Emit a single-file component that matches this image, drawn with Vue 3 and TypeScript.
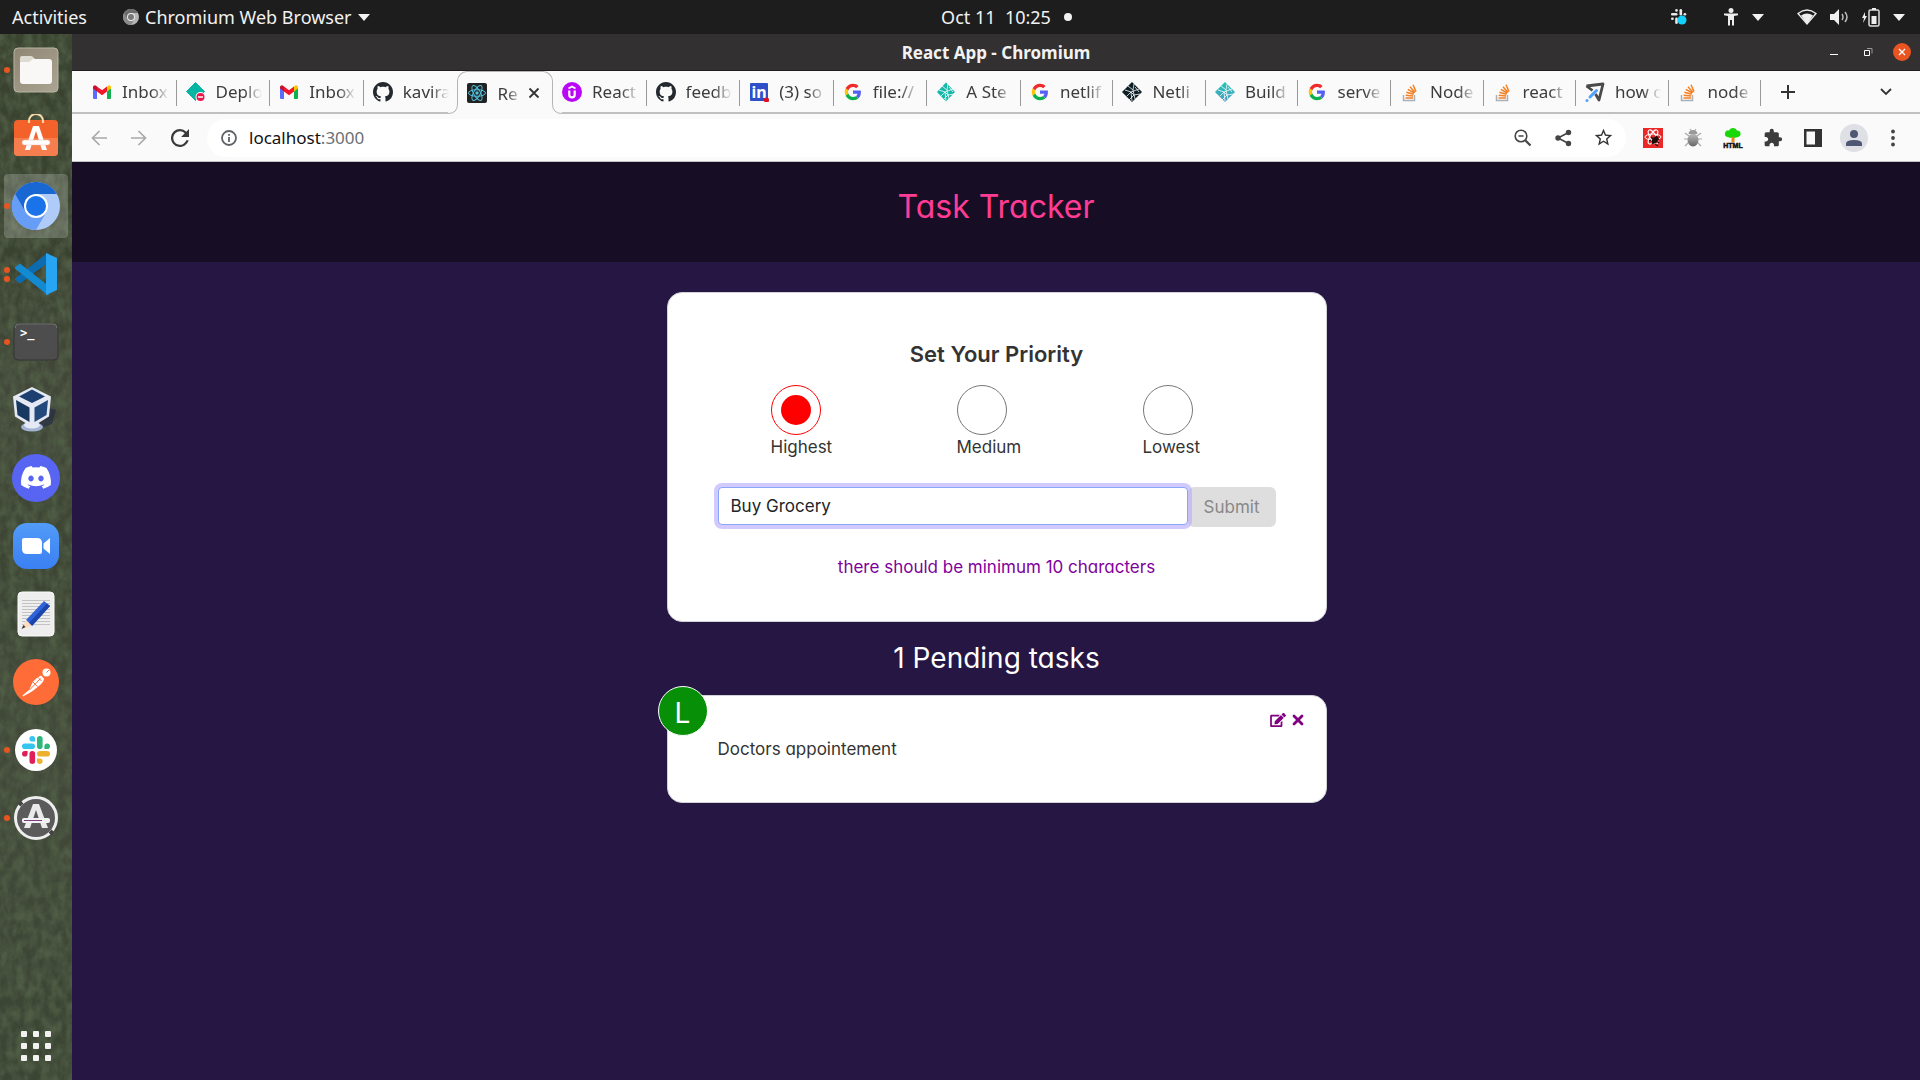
<script setup lang="ts">
import { ref } from 'vue'

interface Tab {
  icon: string
  title: string
  active?: boolean
}

interface DockApp {
  name: string
  icon: string
  windows: number
  focused?: boolean
}

interface Task {
  badge: string
  text: string
}

const tabs: Tab[] = [
  { icon: 'gmail', title: 'Inbox' },
  { icon: 'deploy', title: 'Deplo' },
  { icon: 'gmail', title: 'Inbox' },
  { icon: 'github', title: 'kavira' },
  { icon: 'react', title: 'Re', active: true },
  { icon: 'udemy', title: 'React' },
  { icon: 'github', title: 'feedb' },
  { icon: 'linkedin', title: '(3) so' },
  { icon: 'google', title: 'file://' },
  { icon: 'netlify-teal', title: 'A Ste' },
  { icon: 'google', title: 'netlif' },
  { icon: 'netlify-dark', title: 'Netli' },
  { icon: 'netlify-blue', title: 'Build' },
  { icon: 'google', title: 'serve' },
  { icon: 'stack', title: 'Node' },
  { icon: 'stack', title: 'react' },
  { icon: 'plane', title: 'how o' },
  { icon: 'stack', title: 'node' },
]

const dockApps: DockApp[] = [
  { name: 'Files', icon: 'files', windows: 1 },
  { name: 'Ubuntu Software', icon: 'software', windows: 0 },
  { name: 'Chromium', icon: 'chromium', windows: 1, focused: true },
  { name: 'Visual Studio Code', icon: 'vscode', windows: 2 },
  { name: 'Terminal', icon: 'terminal', windows: 1 },
  { name: 'VirtualBox', icon: 'vbox', windows: 0 },
  { name: 'Discord', icon: 'discord', windows: 0 },
  { name: 'Zoom', icon: 'zoom', windows: 0 },
  { name: 'Text Editor', icon: 'editor', windows: 0 },
  { name: 'Postman', icon: 'postman', windows: 0 },
  { name: 'Slack', icon: 'slack', windows: 1 },
  { name: 'Software Updater', icon: 'updater', windows: 1 },
]

const priorities = ['Highest', 'Medium', 'Lowest']
const priority = ref('Highest')
const draft = ref('Buy Grocery')
const tasks: Task[] = [{ badge: 'L', text: 'Doctors appointement' }]
</script>

<template>
  <svg class="sprite" aria-hidden="true">
    <defs>
      <linearGradient id="g-files" x1="0" y1="0" x2="1" y2="1"><stop offset="0" stop-color="#8f8672" /><stop offset="1" stop-color="#aaa492" /></linearGradient>
      <linearGradient id="g-zoom" x1="0" y1="0" x2="0" y2="1"><stop offset="0" stop-color="#529bf8" /><stop offset="1" stop-color="#3a80f3" /></linearGradient>
      <linearGradient id="g-net" x1="0" y1="0" x2="0" y2="1"><stop offset="0" stop-color="#20c6b7" /><stop offset="1" stop-color="#4d9abf" /></linearGradient>
      <linearGradient id="g-bug" x1="0" y1="0" x2="0" y2="1"><stop offset="0" stop-color="#bbb" /><stop offset="1" stop-color="#666" /></linearGradient>

      <symbol id="gmail" viewBox="0 0 20 20">
        <path d="M1 5v11a1 1 0 0 0 1 1h3V8z" fill="#5b6cff" /><path d="M19 5v11a1 1 0 0 1-1 1h-3V8z" fill="#10b050" />
        <path d="M15 4.500l1-.8a1.900 1.900 0 0 1 3 1.300v1.500L15 9.500z" fill="#ffc400" />
        <path d="M5 4.500l-1-.8a1.900 1.900 0 0 0-3 1.300v1.500L5 9.500z" fill="#c5102c" />
        <path d="M5 4.500v5l5 3.800 5-3.800v-5l-5 3.800z" fill="#f4152b" />
      </symbol>
      <symbol id="deploy" viewBox="0 0 20 20">
        <path d="M9.500 0.500l9 9-9 9-9-9z" fill="#05b5a3" stroke="#05b5a3" stroke-linejoin="round" />
        <circle cx="14.500" cy="15" r="5" fill="#fff" /><circle cx="14.500" cy="15" r="4" fill="#f0144d" /><path d="M12 15h5" stroke="#fff" stroke-width="1.500" />
      </symbol>
      <symbol id="github" viewBox="0 0 16 16">
        <path fill="#24292f" d="M8 0C3.580 0 0 3.580 0 8c0 3.540 2.290 6.530 5.470 7.590.4.070.55-.17.55-.38 0-.19-.01-.82-.01-1.490-2.010.37-2.530-.49-2.690-.94-.09-.23-.48-.94-.82-1.130-.28-.15-.68-.52-.01-.53.63-.01 1.080.58 1.230.82.72 1.210 1.870.87 2.330.66.07-.52.28-.87.51-1.070-1.780-.2-3.640-.89-3.640-3.950 0-.87.31-1.590.82-2.150-.08-.2-.36-1.020.08-2.120 0 0 .67-.21 2.200.82.64-.18 1.320-.27 2-.27.68 0 1.360.09 2 .27 1.530-1.040 2.200-.82 2.200-.82.44 1.100.16 1.920.08 2.120.51.56.82 1.270.82 2.150 0 3.070-1.870 3.750-3.650 3.950.29.25.54.73.54 1.480 0 1.070-.01 1.930-.01 2.200 0 .21.15.46.55.38A8.013 8.013 0 0016 8c0-4.420-3.580-8-8-8z" />
      </symbol>
      <symbol id="react" viewBox="0 0 20 20">
        <rect width="20" height="20" rx="2" fill="#222" />
        <g fill="none" stroke="#53c1de" stroke-width="1"><ellipse cx="10" cy="10" rx="8.500" ry="3.300" /><ellipse cx="10" cy="10" rx="8.500" ry="3.300" transform="rotate(60 10 10)" /><ellipse cx="10" cy="10" rx="8.500" ry="3.300" transform="rotate(120 10 10)" /></g>
        <circle cx="10" cy="10" r="1.700" fill="#53c1de" />
      </symbol>
      <symbol id="udemy" viewBox="0 0 20 20">
        <circle cx="10" cy="10" r="10" fill="#b808f5" />
        <path d="M6.500 6.500L10 4.500l3.500 2" fill="none" stroke="#fff" stroke-width="1.800" />
        <path d="M7.300 8.500v4.200a2.700 2.700 0 0 0 5.400 0V8.500" fill="none" stroke="#fff" stroke-width="2.200" />
      </symbol>
      <symbol id="linkedin" viewBox="0 0 20 20">
        <rect x="1" y="1" width="18" height="18" rx="1" fill="#2f4fc8" />
        <text x="10" y="16" text-anchor="middle" font-family="Noto Sans, sans-serif" font-weight="700" font-size="16" fill="#fff">in</text>
        <circle cx="17.500" cy="18" r="2.600" fill="#e01020" />
      </symbol>
      <symbol id="google" viewBox="-5 -5 58 58">
        <path fill="#f02b2b" d="M24 9.500c3.540 0 6.710 1.220 9.210 3.600l6.850-6.850C35.900 2.380 30.470 0 24 0 14.620 0 6.510 5.380 2.560 13.220l7.980 6.190C12.430 13.720 17.740 9.500 24 9.500z" />
        <path fill="#5560f5" d="M46.980 24.550c0-1.570-.15-3.090-.38-4.550H24v9.020h12.940c-.58 2.960-2.260 5.480-4.780 7.180l7.730 6c4.510-4.180 7.090-10.360 7.090-17.650z" />
        <path fill="#ffc20a" d="M10.530 28.590c-.48-1.450-.76-2.990-.76-4.590s.27-3.140.76-4.590l-7.980-6.190C.92 16.460 0 20.120 0 24c0 3.880.92 7.540 2.560 10.780z" />
        <path fill="#0bb04a" d="M24 48c6.480 0 11.930-2.130 15.890-5.810l-7.730-6c-2.150 1.450-4.920 2.300-8.160 2.300-6.260 0-11.570-4.220-13.470-9.910l-7.980 6.190C6.510 42.620 14.620 48 24 48z" />
      </symbol>
      <symbol id="net-lines" viewBox="0 0 20 20">
        <path d="M3 8l6 2 8-3M6 4l5 4 2 9M9 10l-4 4M11 8l1-6M12 13l6-1M9 10l1 9M9 10l3 3-5 5M13 5l4 5" fill="none" stroke="#fafafa" stroke-width=".8" />
      </symbol>
      <symbol id="netlify-teal" viewBox="0 0 20 20"><path d="M10 .5l9 9.500-9 9.500L1 10z" fill="#14b8a8" /><use href="#net-lines" /></symbol>
      <symbol id="netlify-dark" viewBox="0 0 20 20"><path d="M10 0l10 10-10 10L0 10z" fill="#0e1e25" /><use href="#net-lines" /></symbol>
      <symbol id="netlify-blue" viewBox="0 0 20 20"><path d="M10 0l10 10-10 10L0 10z" fill="url(#g-net)" /><use href="#net-lines" /></symbol>
      <symbol id="stack" viewBox="0 0 20 20">
        <path d="M3.500 13v5.500h11V13" fill="none" stroke="#a9b0b8" stroke-width="1.500" />
        <path d="M5.500 16h7.500M5.700 13.200l7.400 .8M6.400 10.300l7.200 2M7.800 7.300l6.500 3.700M10 4.800l5 5.600M13 2.800l3 6.800" stroke="#f48024" stroke-width="1.500" />
      </symbol>
      <symbol id="plane" viewBox="0 0 20 20">
        <path d="M1.500 4L18 2l-4 16-3.500-6" fill="none" stroke="#4a4a4a" stroke-width="2.800" stroke-linejoin="round" /><path d="M1.500 4l6 4.500" stroke="#4a4a4a" stroke-width="2.800" />
        <path d="M11.500 8.500L5 15" stroke="#4da3ff" stroke-width="3" stroke-linecap="round" /><circle cx="2" cy="18.500" r="1.500" fill="#4da3ff" />
      </symbol>

      <symbol id="files" viewBox="0 0 48 48">
        <rect x="2" y="2" width="44" height="44" rx="4" fill="url(#g-files)" stroke="#b9b4a6" />
        <path d="M8 12q0-2 2-2h9q1 0 2 1l3 3v6H8z" fill="#dedbd2" />
        <path d="M8 17q0-1 1-1h8l4-3h16q3 0 3 3v19q0 3-3 3H11q-3 0-3-3z" fill="#f9f8f7" />
      </symbol>
      <symbol id="software" viewBox="0 0 48 48">
        <rect x="2" y="6" width="44" height="36" rx="4" fill="#f4622c" /><path d="M2 24h44v14a4 4 0 0 1-4 4H6a4 4 0 0 1-4-4z" fill="#f67d4e" />
        <path d="M17 9V7a7 7 0 0 1 14 0v2" fill="none" stroke="#f5d9a8" stroke-width="2" />
        <path d="M21 12h6l8 24h-5l-6-19-6 19h-5z" fill="#fff" /><rect x="10" y="26" width="28" height="5" rx="2.500" fill="#fff" stroke="#e7b9a4" stroke-width=".5" />
      </symbol>
      <symbol id="chromium" viewBox="0 0 48 48">
        <circle cx="24" cy="24" r="24" fill="#afccf9" />
        <path d="M24 24L3.200 12A24 24 0 0 0 24 48l10.400-18z" fill="#669df6" />
        <path d="M24 12h20.800A24 24 0 0 0 3.200 12L13.600 30z" fill="#1967d2" />
        <circle cx="24" cy="24" r="12" fill="#fff" /><circle cx="24" cy="24" r="10" fill="#1a73e8" />
      </symbol>
      <symbol id="vscode" viewBox="0 0 48 48">
        <path d="M3 29l5 4 28-21V3z" fill="#0d6cb0" stroke="#0d6cb0" stroke-linejoin="round" />
        <path d="M3 18l5-4 28 22v9z" fill="#138bd3" stroke="#138bd3" stroke-linejoin="round" />
        <path d="M34 3l11 5v32l-11 5z" fill="#28a5f2" />
      </symbol>
      <symbol id="terminal" viewBox="0 0 48 48">
        <rect x="2" y="6" width="44" height="36" rx="4" fill="#4d4d4d" stroke="#343434" />
        <path d="M3 10q0-4 4-4h34q4 0 4 4" fill="none" stroke="#777" />
        <text x="8" y="19" font-family="DejaVu Sans Mono, monospace" font-weight="700" font-size="12" fill="#fff">&gt;_</text>
      </symbol>
      <symbol id="vbox" viewBox="0 0 48 48">
        <path d="M30 20l14 4-4 14-16 6z" fill="#1c2547" opacity=".55" />
        <ellipse cx="20" cy="41" rx="11" ry="4.500" fill="#a4b4d3" /><ellipse cx="20" cy="39" rx="8" ry="3.500" fill="#e5eaf5" />
        <path d="M20 1l19 9.500-2 20L20 41 3 30.500l-2-20z" fill="#e4e9f3" />
        <path d="M20 3.500l13 7-13 6.500-13-6.500z" fill="#1d3f70" /><path d="M4 14l13.500 7.500V36L5.500 29z" fill="#173861" /><path d="M36 14l-13.500 7.500V36l12-7z" fill="#234a7b" />
      </symbol>
      <symbol id="discord" viewBox="0 0 48 48">
        <circle cx="24" cy="24" r="24" fill="#5865f2" />
        <path transform="translate(9 12) scale(.236)" fill="#fff" d="M107.700,8.070A105.150,105.150,0,0,0,81.470,0a72.060,72.060,0,0,0-3.360,6.830A97.680,97.680,0,0,0,49,6.830,72.370,72.370,0,0,0,45.640,0,105.890,105.890,0,0,0,19.390,8.090C2.790,32.650-1.710,56.600.54,80.210h0A105.730,105.730,0,0,0,32.710,96.360,77.700,77.700,0,0,0,39.600,85.250a68.420,68.420,0,0,1-10.850-5.180c.91-.66,1.800-1.340,2.660-2a75.570,75.570,0,0,0,64.320,0c.87.71,1.760,1.390,2.660,2a68.680,68.680,0,0,1-10.870,5.190,77,77,0,0,0,6.890,11.100A105.250,105.250,0,0,0,126.600,80.220h0C129.240,52.840,122.090,29.110,107.700,8.070ZM42.450,65.690C36.180,65.690,31,60,31,53s5-12.740,11.430-12.740S54,46,53.890,53,48.840,65.690,42.450,65.690Zm42.240,0C78.410,65.690,73.250,60,73.250,53s5-12.740,11.440-12.740S96.230,46,96.120,53,91.080,65.690,84.690,65.690Z" />
      </symbol>
      <symbol id="zoom" viewBox="0 0 48 48">
        <rect x="1" y="1" width="46" height="46" rx="14" fill="url(#g-zoom)" />
        <path d="M10 18q0-2 2-2h13q5 0 5 5v9q0 2-2 2H15q-5 0-5-5z" fill="#fff" /><path d="M31.500 21.500l6.500-5.500v16l-6.500-5.500z" fill="#fff" />
      </symbol>
      <symbol id="editor" viewBox="0 0 48 48">
        <rect x="6" y="2" width="36" height="44" rx="4" fill="#eeeeee" stroke="#fafafa" />
        <path d="M10 10.500h28M10 13.500h28M10 16.500h28M10 19.500h28M10 22.500h28M10 25.500h28M10 28.500h28M10 31.500h28M10 34.500h28" stroke="#c3c3c3" />
        <path d="M32 11l6 5-18 20-6-6z" fill="#2f63d9" /><path d="M35 13.500L17 33l3 3 18-20z" fill="#1b45ab" /><path d="M14 30l6 6-10 3z" fill="#fbdcc0" /><path d="M11.500 35l2 2-4 2z" fill="#333" />
      </symbol>
      <symbol id="postman" viewBox="0 0 48 48">
        <circle cx="24" cy="24" r="23" fill="#ff6c37" />
        <circle cx="34.500" cy="14.500" r="4" fill="#fff" /><path d="M34.500 14.500l2.500-2.500" stroke="#ff6c37" />
        <path d="M29 17.500l3 3c0 3-3 6-7 9l-5 4-9 5-.5-1 6.500-5.500 2-4c1-4 5-8 10-10.500z" fill="#fff" />
        <path d="M28.500 20.500L17.500 32M21 24l4.500 4.500M26 19.500l3.500 3.500" stroke="#ff6c37" stroke-width="1" />
      </symbol>
      <symbol id="slack-mark" viewBox="0 0 28 28">
        <g fill="#36c5f0"><rect y="7.500" width="13" height="5.600" rx="2.800" /><path d="M13 5.600h-2.800A2.800 2.800 0 1 1 13 2.800z" /></g>
        <g fill="#2eb67d"><rect x="15" width="5.600" height="13" rx="2.800" /><path d="M22.400 13v-2.800a2.800 2.800 0 1 1 2.800 2.800z" /></g>
        <g fill="#ecb22e"><rect x="15" y="15" width="13" height="5.600" rx="2.800" /><path d="M15 22.400h2.800A2.800 2.800 0 1 1 15 25.200z" /></g>
        <g fill="#e01e5a"><rect x="7.500" y="15" width="5.600" height="13" rx="2.800" /><path d="M5.600 15v2.800A2.800 2.800 0 1 1 2.800 15z" /></g>
      </symbol>
      <symbol id="slack" viewBox="0 0 48 48"><circle cx="24" cy="24" r="21" fill="#fff" /><use href="#slack-mark" x="10" y="10" width="28" height="28" /></symbol>
      <symbol id="updater" viewBox="0 0 48 48">
        <circle cx="24" cy="24" r="20.500" fill="#5b5b5b" stroke="#eee" stroke-width="3" /><path d="M7 11l3-3M38 40l3-3" stroke="#444" stroke-width="4" />
        <path d="M21 10h6l9 24h-6l-6-18-6 18h-6z" fill="#eaeaea" /><rect x="10" y="24" width="28" height="5" rx="2" fill="#f2f2f2" /><path d="M12 26.500h18" stroke="#7d3a80" stroke-width="1" />
      </symbol>
    </defs>
  </svg>

  <div class="desktop">
    <header class="topbar">
      <div class="topbar-left">
        <button class="plain">Activities</button>
        <button class="plain app-menu">
          <svg width="16" height="16" viewBox="0 0 48 48"><circle cx="24" cy="24" r="24" fill="#b5b5b5" /><path d="M24 24L3.200 12A24 24 0 0 0 24 48l10.400-18z" fill="#8a8a8a" /><path d="M24 12h20.800A24 24 0 0 0 3.200 12L13.600 30z" fill="#6c6c6c" /><circle cx="24" cy="24" r="12" fill="#eee" /><circle cx="24" cy="24" r="9" fill="#777" /></svg>
          <span>Chromium Web Browser</span>
          <i class="caret"></i>
        </button>
      </div>
      <div class="clock"><span>Oct 11&nbsp; 10:25</span><i class="dot"></i></div>
      <div class="tray">
        <svg class="tray-slack" width="16" height="16" viewBox="0 0 16 16"><g fill="#e8e8e8"><rect y="4" width="6.500" height="2.600" rx="1.300" /><rect x="4.200" y="0" width="2.600" height="2.800" rx="1.300" /><rect x="8.500" y="0" width="2.600" height="6.500" rx="1.300" /><rect x="12.500" y="4" width="2.800" height="2.600" rx="1.300" /><rect x="0" y="8.500" width="2.800" height="2.600" rx="1.300" /><rect x="4.200" y="8.500" width="2.600" height="6.500" rx="1.300" /></g><circle cx="11" cy="11" r="4.500" fill="#12d0fa" /></svg>
        <svg class="tray-person" width="16" height="18" viewBox="0 0 16 18"><circle cx="8" cy="2.500" r="2.500" fill="#eee" /><path d="M1 5.500h14v1.800l-4 .7v9.500H9V12H7v5.500H5V8l-4-.7z" fill="#eee" /></svg>
        <i class="caret"></i>
        <svg class="tray-wifi" width="20" height="16" viewBox="0 0 20 16"><path d="M1 4.500Q10-2.500 19 4.500L10 15z" fill="none" stroke="#eee" stroke-width="1.300" /><path d="M4 6.500q6-4 12 0L10 15z" fill="#eee" /></svg>
        <svg class="tray-sound" width="20" height="18" viewBox="0 0 20 18"><path d="M1 6h4l5-5v16l-5-5H1z" fill="#eee" /><path d="M13 6q2 3 0 6M16 4q4 5 0 10" fill="none" stroke="#bbb" stroke-width="1.500" /></svg>
        <svg class="tray-battery" width="20" height="20" viewBox="0 0 20 20"><path d="M4 5L1 11h2l-1 5 4-7H4z" fill="#eee" /><rect x="8" y="3" width="10" height="16" rx="1.500" fill="none" stroke="#ddd" stroke-width="1.500" /><path d="M11 1h4v2h-4zM10.500 9h5v8h-5z" fill="#eee" /></svg>
        <i class="caret"></i>
      </div>
    </header>

    <div class="workspace">
      <nav class="dock" aria-label="Dock">
        <svg class="grass" aria-hidden="true">
          <filter id="grass" x="0" y="0" width="100%" height="100%"><feTurbulence type="fractalNoise" baseFrequency=".12 .08" numOctaves="3" seed="4" /><feColorMatrix values="0 0 0 0 .08  0 0 0 0 .11  0 0 0 0 .06  2 0 0 0 -.6" /></filter>
          <rect width="100%" height="100%" filter="url(#grass)" />
        </svg>
        <button v-for="app in dockApps" :key="app.name" class="dock-app" :class="{ focused: app.focused }" :aria-label="app.name">
          <span class="pips"><i v-for="n in app.windows" :key="n"></i></span>
          <svg width="48" height="48"><use :href="'#' + app.icon" /></svg>
        </button>
        <button class="show-apps" aria-label="Show applications"><i v-for="n in 9" :key="n"></i></button>
      </nav>

      <div class="window">
        <div class="titlebar">
          <span class="window-title">React App - Chromium</span>
          <div class="window-buttons">
            <button class="plain" aria-label="Minimize"><svg width="18" height="18"><path d="M5 11.500h8" stroke="#fff" /></svg></button>
            <button class="plain" aria-label="Restore"><svg width="18" height="18"><path d="M5.500 7.500h5v5h-5z" fill="none" stroke="#fff" /><path d="M8 5.500h5v5" fill="none" stroke="#999" /></svg></button>
            <button class="plain" aria-label="Close"><svg width="18" height="18"><circle cx="9" cy="9" r="9" fill="#e95420" /><path d="M6 6l6 6M12 6l-6 6" stroke="#fff" stroke-width="1.300" /></svg></button>
          </div>
        </div>

        <div class="tabstrip">
          <div class="tabs">
            <div v-for="(tab, i) in tabs" :key="i" class="tab" :class="{ active: tab.active, before: tabs[i + 1]?.active }">
              <svg v-if="tab.active" class="flare flare-left" width="10" height="10"><rect width="10" height="10" fill="#fafafa" /><path d="M0 9.500Q9.500 9.500 9.500 0" fill="none" stroke="#b4b4b4" /></svg>
              <svg class="favicon" width="20" height="20"><use :href="'#' + tab.icon" /></svg>
              <span class="tab-title">{{ tab.title }}</span>
              <button v-if="tab.active" class="plain tab-close" aria-label="Close tab"><svg width="12" height="12"><path d="M1.500 1.500l9 9M10.500 1.500l-9 9" stroke="#333" stroke-width="1.800" /></svg></button>
              <svg v-if="tab.active" class="flare flare-right" width="10" height="10"><rect width="10" height="10" fill="#fafafa" /><path d="M10 9.500Q.5 9.500 .5 0" fill="none" stroke="#b4b4b4" /></svg>
            </div>
          </div>
          <div class="tab-actions">
            <button class="plain" aria-label="New tab"><svg width="16" height="16"><path d="M8 1v14M1 8h14" stroke="#333" stroke-width="2" /></svg></button>
            <button class="plain" aria-label="Search tabs"><svg width="12" height="8"><path d="M1 1l5 5 5-5" fill="none" stroke="#333" stroke-width="1.800" /></svg></button>
          </div>
        </div>

        <div class="toolbar">
          <div class="nav-buttons">
            <button class="plain" aria-label="Back"><svg width="16" height="16" viewBox="0 0 16 16"><path d="M16 8H2M8.500 1L1.500 8l7 7" fill="none" stroke="#a9a9a9" stroke-width="1.700" /></svg></button>
            <button class="plain" aria-label="Forward"><svg width="16" height="16" viewBox="0 0 16 16"><path d="M0 8h14M7.500 1l7 7-7 7" fill="none" stroke="#a9a9a9" stroke-width="1.700" /></svg></button>
            <button class="plain" aria-label="Reload"><svg width="18" height="18" viewBox="4 4 16 16"><path d="M17.650 6.350A7.958 7.958 0 0 0 12 4a8 8 0 1 0 7.730 10h-2.080A6 6 0 1 1 12 6c1.660 0 3.140.69 4.220 1.780L13 11h7V4z" fill="#3a3a3a" /></svg></button>
          </div>
          <div class="omnibox">
            <svg width="24" height="24" viewBox="0 0 24 24" class="info"><circle cx="12" cy="12" r="7" fill="none" stroke="#5f6368" stroke-width="1.800" /><path d="M12 11v5M12 8v1.800" stroke="#5f6368" stroke-width="1.800" /></svg>
            <span class="url">localhost<em>:3000</em></span>
            <div class="omni-icons">
              <button class="plain" aria-label="Zoom out"><svg width="20" height="20" viewBox="0 0 20 20"><circle cx="8" cy="8" r="5.800" fill="none" stroke="#444" stroke-width="1.600" /><path d="M12.500 12.500l5 5" stroke="#444" stroke-width="2.200" /><path d="M5.500 8h5" stroke="#444" stroke-width="1.500" /></svg></button>
              <button class="plain" aria-label="Share"><svg width="20" height="20" viewBox="0 0 20 20"><path d="M15.500 4.500L5 10l10.500 5.500" fill="none" stroke="#444" stroke-width="1.600" /><circle cx="15.500" cy="4.500" r="2.700" fill="#444" /><circle cx="5" cy="10" r="2.700" fill="#444" /><circle cx="15.500" cy="15.500" r="2.700" fill="#444" /></svg></button>
              <button class="plain" aria-label="Bookmark"><svg width="21" height="21" viewBox="0 0 24 24"><path d="M22 9.240l-7.190-.62L12 2 9.190 8.630 2 9.240l5.460 4.730L5.820 21 12 17.270 18.180 21l-1.630-7.030zM12 15.400l-3.760 2.270 1-4.280-3.320-2.880 4.380-.38L12 6.100l1.710 4.040 4.380.38-3.320 2.880 1 4.280z" fill="#333" /></svg></button>
            </div>
          </div>
          <div class="extensions">
            <button class="plain" aria-label="React Developer Tools"><svg width="20" height="20" viewBox="0 0 20 20"><rect width="20" height="20" fill="#ea2828" /><g fill="none" stroke="#fff" stroke-width="1"><ellipse cx="10" cy="9" rx="8" ry="3" /><ellipse cx="10" cy="9" rx="8" ry="3" transform="rotate(60 10 9)" /><ellipse cx="10" cy="9" rx="8" ry="3" transform="rotate(120 10 9)" /></g><ellipse cx="12" cy="12" rx="2.600" ry="4.200" transform="rotate(40 12 12)" fill="#1d0d0d" /><path d="M8 9l8 6M14 8l-5 8M10 14l6-3M12 16l3 2M8 12l-2 1" stroke="#1d0d0d" stroke-width="1.200" /></svg></button>
            <button class="plain" aria-label="Bug reporter"><svg width="20" height="20" viewBox="0 0 20 20"><path d="M2 5l4 3M18 5l-4 3M1 11h18M2 18l4-4M18 18l-4-4M7 1l2 3M13 1l-2 3" stroke="#aaa" stroke-width="1.200" fill="none" /><ellipse cx="10" cy="12" rx="5.500" ry="6.500" fill="url(#g-bug)" /><path d="M5.500 6a4.500 4 0 0 1 9 0z" fill="#999" /></svg></button>
            <button class="plain" aria-label="HTML tree"><svg class="favicon" width="20" height="20" viewBox="0 0 20 20"><path d="M8.500 8h3v6.500H13H7h1.500z" fill="#e58a18" /><path d="M10 0a4 4 0 0 1 4 2.500 3.300 3.300 0 0 1 1 6.500l-3.500 1L10 8.500 8 10 4.500 9A3.300 3.300 0 0 1 6 2.500 4 4 0 0 1 10 0z" fill="#18d80a" /><text x="10" y="19.500" text-anchor="middle" font-family="Liberation Sans, sans-serif" font-weight="700" font-size="7" fill="#111" stroke="#111" stroke-width=".5">HTML</text></svg></button>
            <button class="plain" aria-label="Extensions"><svg width="20" height="20" viewBox="0 0 24 24"><path d="M20.500 11H19V7c0-1.100-.9-2-2-2h-4V3.500a2.500 2.500 0 0 0-5 0V5H4c-1.100 0-1.990.9-1.990 2v3.800H3.500c1.490 0 2.700 1.210 2.700 2.700s-1.210 2.700-2.700 2.700H2V20c0 1.100.9 2 2 2h3.800v-1.500c0-1.490 1.210-2.700 2.700-2.700s2.700 1.210 2.700 2.700V22H17c1.100 0 2-.9 2-2v-4h1.500a2.500 2.500 0 0 0 0-5z" fill="#3c3c3c" /></svg></button>
            <button class="plain" aria-label="Side panel"><svg width="20" height="20" viewBox="0 0 20 20"><path d="M1 1h18v18H1zM3.500 3.500v13H12v-13z" fill="#333" fill-rule="evenodd" /></svg></button>
            <button class="plain avatar" aria-label="Profile"><svg width="28" height="28" viewBox="0 0 28 28"><circle cx="14" cy="14" r="14" fill="#dfe0e6" /><circle cx="14" cy="10" r="4" fill="#4f5872" /><path d="M6 22v-2.500Q6 16 14 16t8 3.500V22z" fill="#4f5872" /></svg></button>
            <button class="plain" aria-label="Menu"><svg width="20" height="20" viewBox="0 0 20 20"><g fill="#444"><circle cx="10" cy="3.500" r="1.900" /><circle cx="10" cy="10" r="1.900" /><circle cx="10" cy="16.500" r="1.900" /></g></svg></button>
          </div>
        </div>

        <div class="page">
          <header class="page-header"><h1>Task Tracker</h1></header>
          <main class="page-body">
            <form class="card form-card" @submit.prevent>
              <h2 id="priority-title">Set Your Priority</h2>
              <div class="priorities" role="radiogroup" aria-labelledby="priority-title">
                <label v-for="p in priorities" :key="p" class="priority">
                  <input v-model="priority" type="radio" name="priority" :value="p" />
                  <span>{{ p }}</span>
                </label>
              </div>
              <div class="entry">
                <input v-model="draft" type="text" class="entry-text" aria-label="Task" />
                <button class="submit" type="submit" disabled>Submit</button>
              </div>
              <p class="hint">there should be minimum 10 characters</p>
            </form>

            <h2 class="pending">{{ tasks.length }} Pending tasks</h2>

            <article v-for="task in tasks" :key="task.text" class="card task-card">
              <span class="badge">{{ task.badge }}</span>
              <div class="task-actions">
                <button class="plain" aria-label="Edit"><svg width="16" height="14" viewBox="0 0 576 512"><path fill="purple" d="M402.600 83.200l90.200 90.200c3.800 3.800 3.800 10 0 13.800L274.400 405.600l-92.800 10.300c-12.400 1.400-22.900-9.100-21.500-21.500l10.300-92.800L388.800 83.200c3.800-3.800 10-3.800 13.800 0zm162-22.900l-48.800-48.800c-15.200-15.200-39.900-15.200-55.200 0l-35.400 35.400c-3.800 3.800-3.800 10 0 13.800l90.200 90.200c3.800 3.800 10 3.800 13.800 0l35.400-35.400c15.200-15.300 15.200-40 0-55.200zM384 346.200V448H64V128h229.800c3.200 0 6.200-1.300 8.500-3.500l40-40c7.600-7.600 2.200-20.500-8.500-20.500H48C21.500 64 0 85.500 0 112v352c0 26.500 21.500 48 48 48h352c26.500 0 48-21.500 48-48V306.200c0-10.700-12.900-16-20.500-8.500l-40 40c-2.200 2.300-3.500 5.300-3.500 8.500z" /></svg></button>
                <button class="plain" aria-label="Delete"><svg width="12" height="12" viewBox="0 0 12 12"><path d="M2 2l8 8M10 2l-8 8" stroke="purple" stroke-width="2.800" stroke-linecap="round" /></svg></button>
              </div>
              <p>{{ task.text }}</p>
            </article>
          </main>
        </div>
      </div>
    </div>
  </div>
</template>

<style>
body {
  margin: 0;
  background: #261643;
}
</style>

<style scoped>
.sprite {
  position: absolute;
  width: 0;
  height: 0;
}

.desktop {
  display: flex;
  flex-direction: column;
  min-height: 100vh;
  font-family: 'Noto Sans', sans-serif;
  font-size: 18px;
  color: #f2f2f2;
}

.desktop * {
  box-sizing: border-box;
}

.plain {
  display: flex;
  align-items: center;
  justify-content: center;
  padding: 0;
  border: 0;
  background: none;
  color: inherit;
  font: inherit;
}

svg {
  display: block;
  flex: none;
}

.caret {
  border: 6px solid transparent;
  border-top: 7px solid #f2f2f2;
  border-bottom: 0;
}

.topbar {
  display: grid;
  grid-template-columns: 1fr auto 1fr;
  align-items: center;
  height: 34px;
  padding: 0 15px 0 12px;
  background: #1d1d1d;
}

.topbar-left {
  display: flex;
  gap: 36px;
}

.app-menu {
  gap: 6px;
}

.clock {
  display: flex;
  align-items: center;
  gap: 13px;
  padding-left: 96px;
}

.dot {
  width: 8px;
  height: 8px;
  border-radius: 50%;
  background: #f2f2f2;
}

.tray {
  display: flex;
  justify-content: flex-end;
  align-items: center;
  gap: 12px;
}

.tray-slack {
  margin-right: 24px;
}

.tray-person {
  margin-right: 1px;
}

.tray-wifi {
  margin-left: 21px;
}

.workspace {
  display: flex;
  flex: 1;
}

.dock {
  position: relative;
  display: flex;
  flex-direction: column;
  flex: none;
  gap: 4px;
  width: 72px;
  padding: 4px 4px 16px;
  background: linear-gradient(#39432f, #39412f 20%, #43483a 35%, #3c4533 50%, #42493a 70%, #3b4533);
}

.grass {
  position: absolute;
  inset: 0;
  width: 100%;
  height: 100%;
}

.dock-app {
  position: relative;
  display: flex;
  align-items: center;
  justify-content: center;
  height: 64px;
  padding: 0;
  border: 0;
  border-radius: 4px;
  background: none;
}

.dock-app.focused {
  background: rgba(255, 255, 255, 0.2);
}

.pips {
  position: absolute;
  left: 0;
  display: flex;
  flex-direction: column;
  gap: 3px;
}

.pips i {
  width: 6px;
  height: 6px;
  border-radius: 50%;
  background: #e95420;
}

.show-apps {
  position: relative;
  display: grid;
  grid-template-columns: repeat(3, 6px);
  gap: 6px;
  align-self: center;
  margin-top: auto;
  padding: 0 0 3px;
  border: 0;
  background: none;
}

.show-apps i {
  height: 6px;
  border-radius: 1px;
  background: #f2f2f2;
}

.window {
  display: flex;
  flex: 1;
  flex-direction: column;
  min-width: 0;
}

.titlebar {
  display: grid;
  grid-template-columns: 1fr auto 1fr;
  align-items: center;
  height: 37px;
  border-bottom: 1px solid #1f1d1e;
  background: #333031;
}

.window-title {
  grid-column: 2;
  font-size: 17px;
  font-weight: 700;
}

.window-buttons {
  display: flex;
  justify-content: flex-end;
  gap: 16px;
  padding-right: 9px;
}

.tabstrip {
  display: flex;
  height: 43px;
  padding-left: 11px;
  border-bottom: 2px solid #c0c0c0;
  background: #fafafa;
  color: #3c3c3c;
  font-size: 17px;
}

.tabs {
  display: flex;
  flex: 1;
  min-width: 0;
}

.tab {
  position: relative;
  display: flex;
  flex: 70 1 0;
  align-items: center;
  gap: 10px;
  min-width: 0;
  padding: 0 8px 0 9px;
}

.tab:nth-child(-n + 10) {
  flex-grow: 71;
}

.tab::after {
  content: '';
  position: absolute;
  top: 9px;
  right: 0;
  width: 1px;
  height: 26px;
  background: #999;
}

.tab.active::after,
.tab.before::after {
  content: none;
}

.tab.active {
  z-index: 1;
  height: 43px;
  border: 1px solid #b4b4b4;
  border-bottom: 0;
  border-radius: 10px 10px 0 0;
  background: #fafafa;
}

.flare {
  position: absolute;
  bottom: 0;
}

.flare-left {
  left: -10px;
}

.flare-right {
  right: -10px;
}

.favicon {
  overflow: visible;
}

.tab-title {
  flex: 1;
  min-width: 0;
  overflow: hidden;
  white-space: nowrap;
  mask-image: linear-gradient(to right, #000 calc(100% - 18px), transparent);
}

.tab.active .tab-title {
  margin-right: -6px;
}

.tab-close {
  margin-right: 4px;
}

.tab-actions {
  display: flex;
  align-items: center;
  justify-content: space-between;
  width: 159px;
  padding: 0 28px 0 19px;
}

.toolbar {
  display: flex;
  align-items: center;
  height: 48px;
  border-bottom: 1px solid #c4c4c4;
  background: #fafafa;
  color: #111;
}

.nav-buttons {
  display: flex;
  align-items: center;
  gap: 24px;
  padding: 0 18px 0 19px;
}

.omnibox {
  display: flex;
  flex: 1;
  align-items: center;
  gap: 8px;
  height: 38px;
  padding: 0 12px 0 10px;
  border-radius: 19px;
  background: #fff;
}

.url {
  flex: 1;
  font-size: 17px;
}

.url em {
  color: #6b7075;
  font-style: normal;
}

.omni-icons {
  display: flex;
  align-items: center;
  gap: 20px;
}

.extensions {
  display: flex;
  align-items: center;
  gap: 20px;
  padding: 0 17px;
}

.avatar {
  margin: 0 -5px 0 -3px;
}

.page {
  flex: 1;
  padding-left: 1px;
  background: #261643;
  color: #333;
  font-family: Inter, sans-serif;
  font-feature-settings: 'cv11';
  font-size: 17px;
}

.page-header {
  height: 100px;
  margin-left: -1px;
  padding-top: 21px;
  background: #170d25;
}

h1,
h2,
p {
  margin: 0;
}

h1 {
  color: #ff3c94;
  font-size: 32px;
  font-weight: 400;
  line-height: 48px;
  text-align: center;
}

.page-body {
  max-width: 660px;
  margin: 0 auto;
  padding: 30px 0;
}

.card {
  position: relative;
  border: 1px solid #d3d1d8;
  border-radius: 15px;
  background: #fff;
}

.form-card {
  padding: 44px 50px 42px;
}

.form-card h2 {
  font-size: 22px;
  font-weight: 600;
  line-height: 34px;
  text-align: center;
}

.priorities {
  display: grid;
  grid-template-columns: repeat(3, 1fr);
  margin-top: 14px;
}

.priority {
  display: flex;
  flex-direction: column;
  align-items: flex-start;
  padding-left: 53px;
  line-height: 24px;
}

.priority input {
  width: 50px;
  height: 50px;
  margin: 0;
  padding: 9px;
  border: 1px solid #777;
  border-radius: 50%;
  appearance: none;
  background: #fff;
  background-clip: content-box;
}

.priority input:checked {
  border-color: #f00;
  background-color: #f00;
}

.entry {
  display: flex;
  align-items: flex-start;
  margin-top: 28px;
}

.entry-text {
  z-index: 1;
  flex: 1;
  min-width: 0;
  height: 38px;
  padding: 0 12px;
  border: 1px solid #8aa6f8;
  border-radius: 4px;
  outline: 0;
  box-shadow: 0 0 0 4px rgba(186, 172, 250, 0.65);
  background: #fff;
  color: #212529;
  font: inherit;
  font-feature-settings: inherit;
}

.submit {
  height: 40px;
  padding: 0 16px;
  border: 0;
  border-radius: 6px;
  background: #dedede;
  color: #888;
  font: inherit;
  font-feature-settings: inherit;
}

.hint {
  margin-top: 28px;
  color: #80009c;
  line-height: 24px;
  text-align: center;
}

.pending {
  margin: 16px 0 17px;
  color: #fff;
  font-size: 28px;
  font-weight: 400;
  line-height: 40px;
  text-align: center;
}

.task-card {
  padding: 41px 50px;
  line-height: 24px;
}

.badge {
  position: absolute;
  top: -10px;
  left: -10px;
  width: 50px;
  height: 50px;
  border: 1px solid #fff;
  border-radius: 50%;
  background: #078f07;
  color: #fff;
  font-size: 28px;
  line-height: 52px;
  text-align: center;
}

.task-actions {
  position: absolute;
  top: 17px;
  right: 22px;
  display: flex;
  align-items: center;
  gap: 6px;
}
</style>
